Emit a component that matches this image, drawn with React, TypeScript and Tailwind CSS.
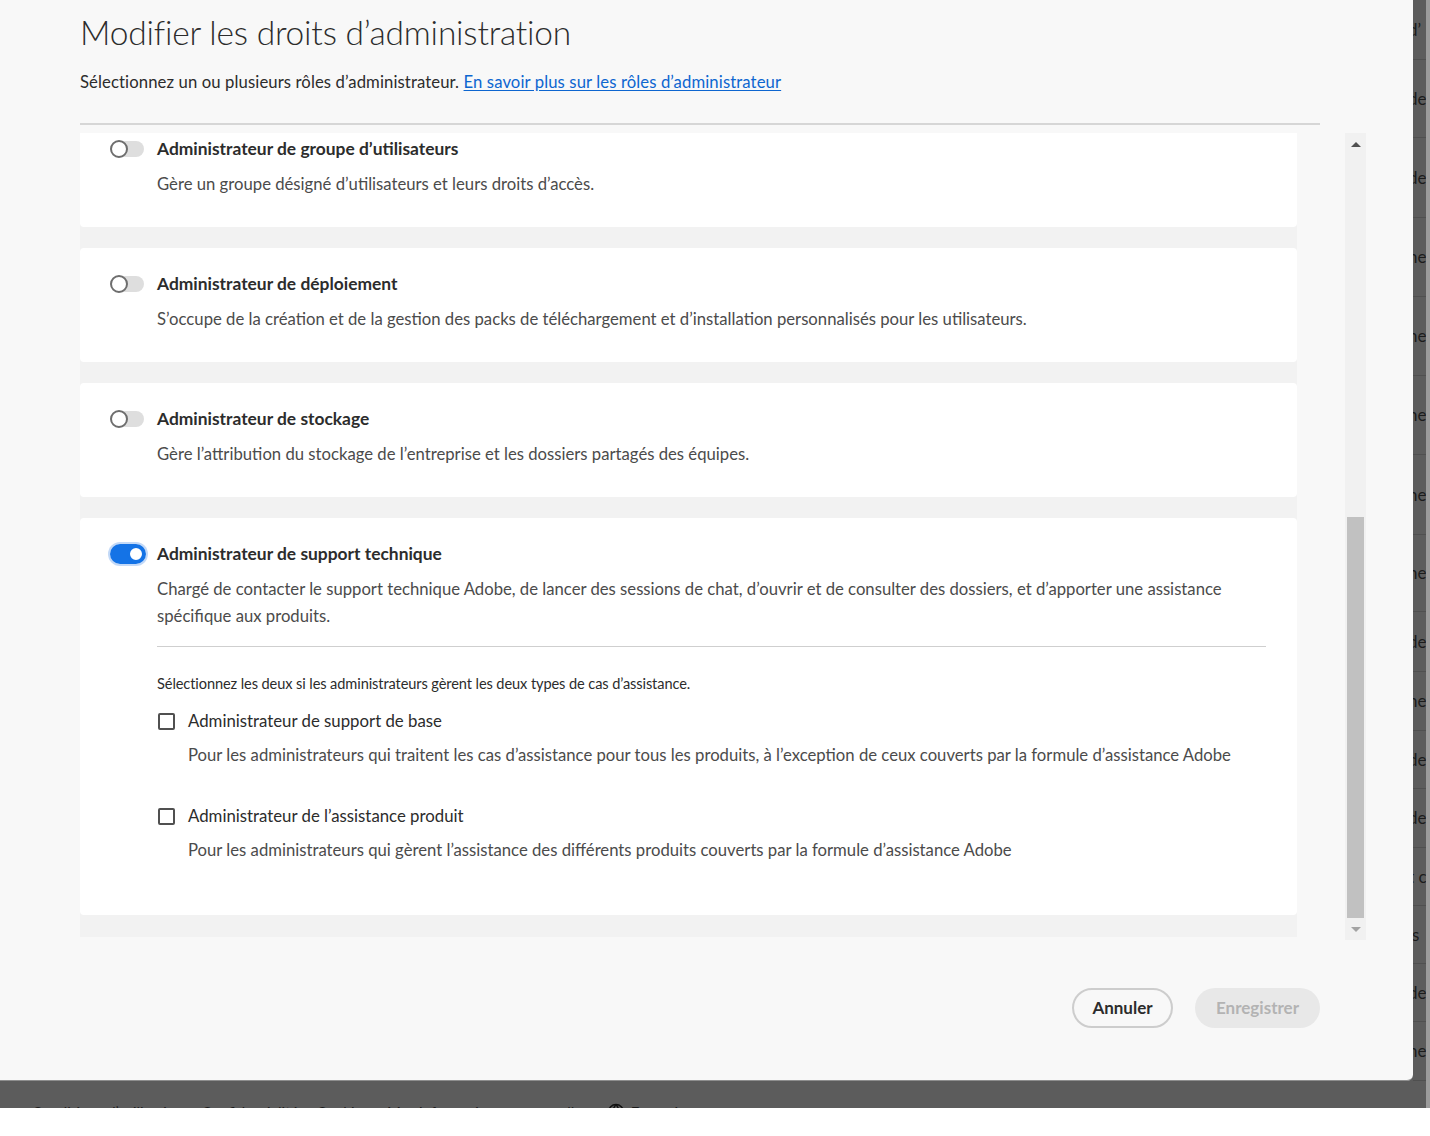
import React from "react";

const font = "font-['Lato','Open_Sans',sans-serif]";

function Toggle({ on }: { on?: boolean }) {
  if (on) {
    return (
      <div className="relative w-[36px] h-[20px] shrink-0 rounded-full shadow-[0_0_0_2px_#c3d9f7]">
        <div className="absolute inset-0 rounded-full bg-[#1473e6]" />
        <div className="absolute right-[1px] top-[1px] w-[18px] h-[18px] rounded-full bg-white border-[3px] border-[#1473e6]" />
      </div>
    );
  }
  return (
    <div className="relative w-[34px] h-[18px] shrink-0">
      <div className="absolute left-[4px] right-0 top-[1px] bottom-[1px] rounded-full bg-[#dedede]" />
      <div className="absolute left-0 top-0 w-[18px] h-[18px] rounded-full bg-white border-2 border-[#6e6e6e]" />
    </div>
  );
}

function Card({ title, desc }: { title: string; desc: string }) {
  return (
    <div className="bg-white rounded-[4px] h-[114px] pt-[25px] pl-[30px] pr-[31px] shrink-0">
      <div className="flex items-center h-[22px]">
        <div className="w-[47px] flex items-center">
          <Toggle />
        </div>
        <div className="text-[17.4px] leading-[22px] font-bold text-[#2c2c2c]">{title}</div>
      </div>
      <div className="mt-[11px] ml-[47px] text-[16.7px] leading-[27px] text-[#4b4b4b]">{desc}</div>
    </div>
  );
}

function Checkbox() {
  return <div className="w-[17px] h-[17px] shrink-0 rounded-[2px] border-2 border-[#505050] bg-white" />;
}

const stripRows: { h: number; t: string }[] = [
  { h: 60, t: "d\u2019" },
  { h: 78, t: "de" },
  { h: 80, t: "de" },
  { h: 79, t: "ne" },
  { h: 79, t: "ne" },
  { h: 79, t: "ne" },
  { h: 80, t: "ne" },
  { h: 77, t: "ne" },
  { h: 60, t: "de" },
  { h: 59, t: "ne" },
  { h: 58, t: "de" },
  { h: 59, t: "de" },
  { h: 58, t: "t c" },
  { h: 58, t: "is" },
  { h: 58, t: "de" },
  { h: 59, t: "ne" },
];

export default function App() {
  return (
    <div className={`w-[1430px] h-[1136px] bg-white overflow-hidden ${font}`}>
      <div className="h-[1108px] flex">
        <div className="w-[1426px] bg-[#5c5c5c] flex flex-col">
          <div className="flex h-[1081px]">
            {/* Dialog */}
            <div className="w-[1413px] h-[1081px] bg-[#f8f8f8] rounded-br-[6px] border-b border-[#8e8e8e] pl-[80px] pt-[12px] flex flex-col shrink-0">
              <h1 className="text-[33.5px] leading-[40px] font-light text-[#2c2c2c] tracking-[-0.2px]">
                Modifier les droits d’administration
              </h1>
              <p className="mt-[19px] text-[16.7px] leading-[22px] text-[#2c2c2c] tracking-[0.1px]">
                Sélectionnez un ou plusieurs rôles d’administrateur.{" "}
                <a className="text-[#0d66d0] underline underline-offset-2" href="#">
                  En savoir plus sur les rôles d’administrateur
                </a>
              </p>
              <div className="mt-[30px] h-[2px] w-[1240px] bg-[#d6d6d6]" />
              <div className="mt-[8px] h-[807px] flex">
                <div className="w-[1217px] h-[804px] bg-[#f2f2f2] overflow-hidden">
                  <div className="-mt-[20px] flex flex-col gap-[21px]">
                    <Card
                      title="Administrateur de groupe d’utilisateurs"
                      desc="Gère un groupe désigné d’utilisateurs et leurs droits d’accès."
                    />
                    <Card
                      title="Administrateur de déploiement"
                      desc="S’occupe de la création et de la gestion des packs de téléchargement et d’installation personnalisés pour les utilisateurs."
                    />
                    <Card
                      title="Administrateur de stockage"
                      desc="Gère l’attribution du stockage de l’entreprise et les dossiers partagés des équipes."
                    />
                    <div className="bg-white rounded-[4px] h-[397px] pt-[25px] pl-[30px] pr-[31px] shrink-0">
                      <div className="flex items-center h-[22px]">
                        <div className="w-[47px] flex items-center">
                          <Toggle on />
                        </div>
                        <div className="text-[17.4px] leading-[22px] font-bold text-[#2c2c2c]">
                          Administrateur de support technique
                        </div>
                      </div>
                      <div className="ml-[47px]">
                        <div className="mt-[11px] text-[16.7px] leading-[27px] text-[#4b4b4b] whitespace-nowrap">
                          Chargé de contacter le support technique Adobe, de lancer des sessions de chat, d’ouvrir et de consulter des dossiers, et d’apporter une assistance
                          <br />
                          spécifique aux produits.
                        </div>
                        <div className="mt-[16px] h-[1px] bg-[#cfcfcf]" />
                        <div className="mt-[28px] text-[14.6px] leading-[18px] text-[#2c2c2c] tracking-[-0.1px]">
                          Sélectionnez les deux si les administrateurs gèrent les deux types de cas d’assistance.
                        </div>
                        <div className="mt-[16px] flex items-center h-[24px]">
                          <div className="w-[31px] pl-[1px]">
                            <Checkbox />
                          </div>
                          <div className="text-[16.8px] leading-[24px] text-[#2c2c2c]">Administrateur de support de base</div>
                        </div>
                        <div className="mt-[10px] ml-[31px] text-[16.7px] leading-[24px] text-[#4b4b4b] whitespace-nowrap">
                          Pour les administrateurs qui traitent les cas d’assistance pour tous les produits, à l’exception de ceux couverts par la formule d’assistance Adobe
                        </div>
                        <div className="mt-[37px] flex items-center h-[24px]">
                          <div className="w-[31px] pl-[1px]">
                            <Checkbox />
                          </div>
                          <div className="text-[16.8px] leading-[24px] text-[#2c2c2c]">Administrateur de l’assistance produit</div>
                        </div>
                        <div className="mt-[10px] ml-[31px] text-[16.7px] leading-[24px] text-[#4b4b4b]">
                          Pour les administrateurs qui gèrent l’assistance des différents produits couverts par la formule d’assistance Adobe
                        </div>
                      </div>
                    </div>
                    <div className="h-[2px]" />
                  </div>
                </div>
                {/* Scrollbar */}
                <div className="ml-[48px] w-[21px] h-[807px] bg-[#f1f1f1] flex flex-col items-center">
                  <div className="h-[22px] flex items-center justify-center">
                    <div className="w-0 h-0 border-l-[5px] border-r-[5px] border-b-[5px] border-l-transparent border-r-transparent border-b-[#505050]" />
                  </div>
                  <div className="flex-1 w-full flex flex-col pl-[2px] pr-[2px]">
                    <div className="h-[362px]" />
                    <div className="h-[401px] bg-[#c1c1c1]" />
                  </div>
                  <div className="h-[22px] flex items-center justify-center">
                    <div className="w-0 h-0 border-l-[5px] border-r-[5px] border-t-[5px] border-l-transparent border-r-transparent border-t-[#a3a3a3]" />
                  </div>
                </div>
              </div>
              <div className="mt-[48px] w-[1240px] flex justify-end gap-[22px]">
                <button className="w-[101px] h-[40px] rounded-full border-2 border-[#cdcdcd] text-[17px] font-bold text-[#2c2c2c]">
                  Annuler
                </button>
                <button className="w-[125px] h-[40px] rounded-full bg-[#e8e8e8] text-[17px] font-bold text-[#b3b3b3]">
                  Enregistrer
                </button>
              </div>
            </div>
            {/* Dimmed page strip on the right */}
            <div className="flex-1 overflow-hidden flex flex-col">
              {stripRows.map((r, i) => (
                <div
                  key={i}
                  style={{ height: r.h }}
                  className="border-b border-[#4f4f4f] flex items-center whitespace-nowrap"
                >
                  <span className="-ml-[5px] text-[17px] text-[#1c1c1c]">{r.t}</span>
                </div>
              ))}
            </div>
          </div>
          {/* Dimmed footer */}
          <div className="h-[27px] overflow-hidden pl-[32px] pt-[21px] flex items-start gap-[18px] whitespace-nowrap text-[15px] leading-[20px] text-[#1a1a1a]">
            <span>Conditions d’utilisation</span>
            <span>Confidentialité</span>
            <span>Cookies</span>
            <span>Mes informations personnelles</span>
            <span className="flex items-center gap-[6px]">
              <svg width="18" height="18" viewBox="0 0 24 24" fill="none" stroke="#111" strokeWidth="2">
                <circle cx="12" cy="12" r="10" />
                <path d="M2 12h20M12 2a15 15 0 0 1 0 20M12 2a15 15 0 0 0 0 20" />
              </svg>
              Français
            </span>
          </div>
        </div>
        <div className="w-[4px] bg-[#9b9b9b]" />
      </div>
    </div>
  );
}
